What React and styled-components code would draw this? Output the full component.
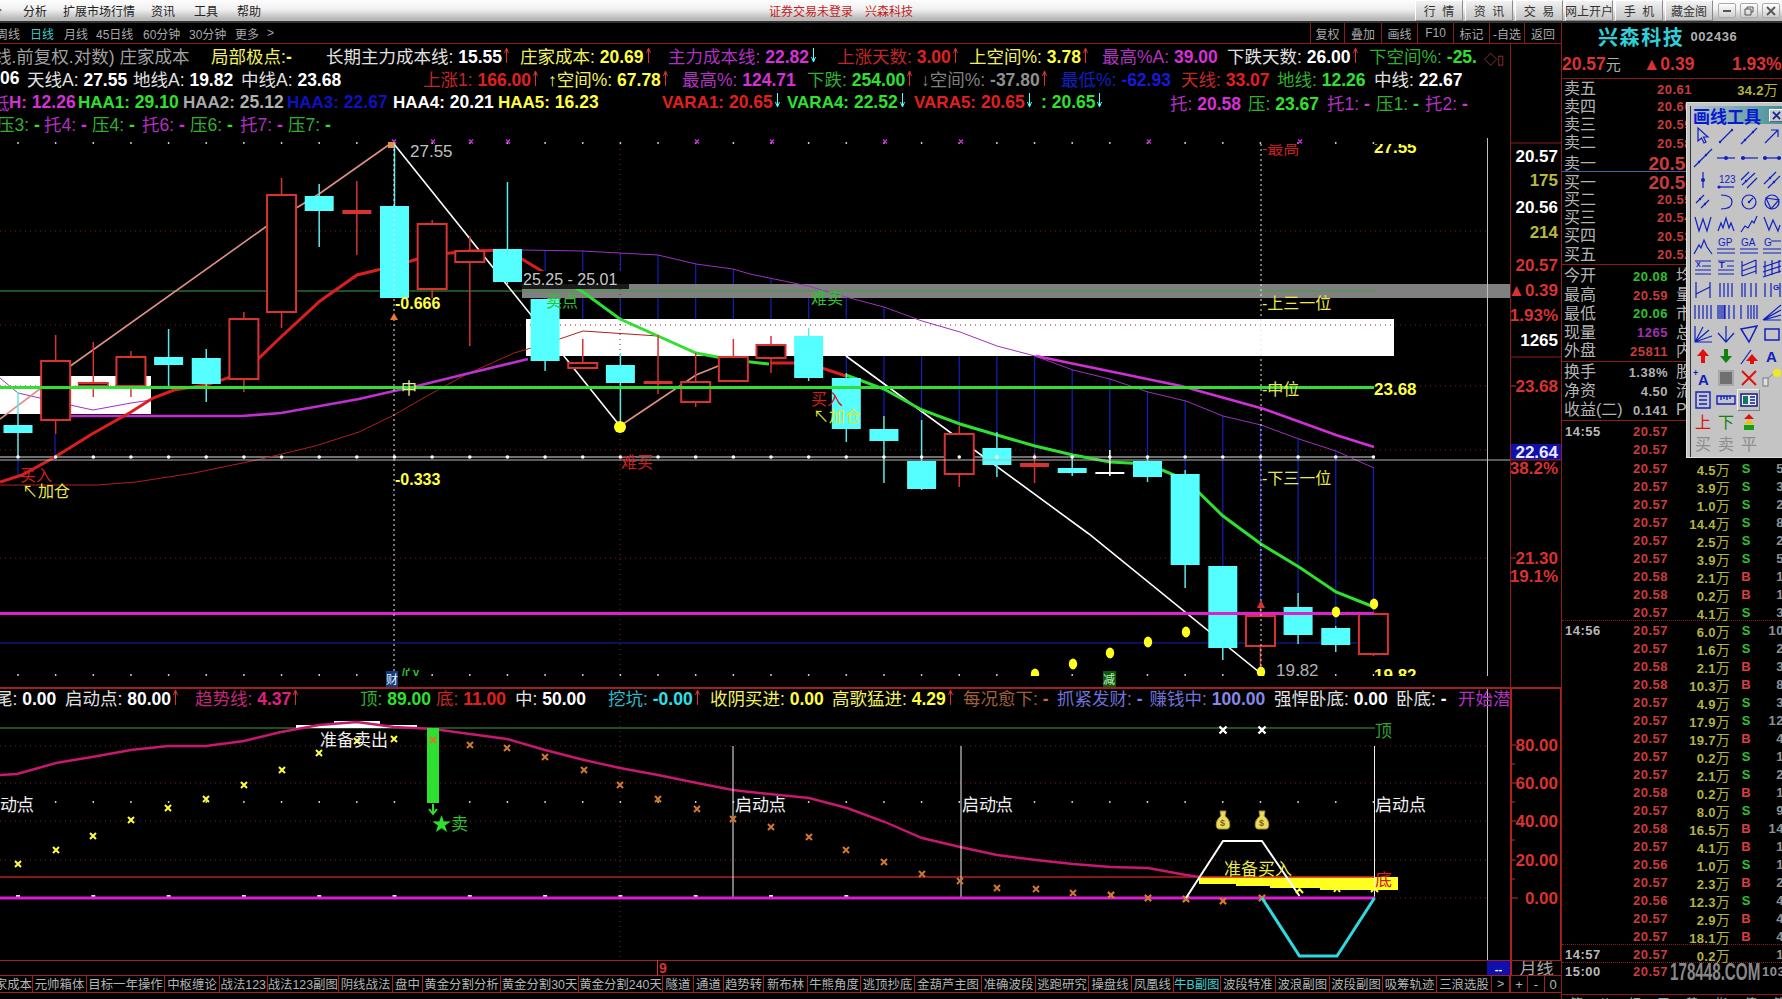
import React from 'react';
import styled, { createGlobalStyle } from 'styled-components';

const SANS = '"Liberation Sans", "Noto Sans CJK SC", sans-serif';
const RED = '#d83232';
const CYAN = '#55ffff';
const LINE_RED = '#8c1c1c';
const BLUE = '#1020c0';

const GlobalStyle = createGlobalStyle`
  html, body { margin: 0; padding: 0; background: #000; }
  * { box-sizing: border-box; }
`;

const Page = styled.div`
  width: 1782px;
  height: 999px;
  overflow: hidden;
  background: #000;
  display: flex;
  flex-direction: column;
  font-family: ${SANS};
`;

/* ---------- title bar ---------- */
const TitleBar = styled.div`
  height: 23px;
  flex: none;
  display: flex;
  align-items: stretch;
  background: linear-gradient(#fdfdfd 0%, #f0f0f0 45%, #b8b8b8 90%);
  border-bottom: 2px solid #333;
  font-size: 12px;
  color: #222;
`;
const MenuGroup = styled.div`
  width: 779px;
  display: flex;
  align-items: center;
  margin-left: -10px;
  flex: none;
`;
const MenuItem = styled.span`
  width: ${p => p.$w}px;
  white-space: nowrap;
`;
const Notice = styled.div`
  width: 646px;
  flex: none;
  display: flex;
  align-items: center;
  gap: 12px;
  color: #c41c1c;
`;
const TopButton = styled.div`
  width: ${p => p.$w || 48}px;
  margin: 0 2px 0 0;
  flex: none;
  display: flex;
  align-items: center;
  justify-content: center;
  background: linear-gradient(#f2f2f2, #c4c4c4);
  border: 1px solid;
  border-color: #fff #8a8a8a #8a8a8a #fff;
  color: #333;
  white-space: pre;
`;
const WinControls = styled.div`
  flex: 1;
  display: flex;
  align-items: center;
  justify-content: center;
  gap: 4px;
`;
const WinButton = styled.div`
  width: 18px;
  height: 15px;
  display: flex;
  align-items: center;
  justify-content: center;
  background: linear-gradient(#fff, #cfcfcf);
  border: 1px solid #aaa;
  border-radius: 2px;
`;

/* ---------- body ---------- */
const Body = styled.div`
  flex: 1;
  display: flex;
  min-height: 0;
`;
const LeftPane = styled.div`
  width: 1562px;
  flex: none;
  display: flex;
  flex-direction: column;
  border-right: 1px solid ${LINE_RED};
`;
const ToolRow = styled.div`
  height: 21px;
  flex: none;
  display: flex;
  align-items: center;
  border-bottom: 1px solid ${LINE_RED};
  font-size: 12px;
  color: #a8a8a8;
`;
const PeriodTabs = styled.div`
  flex: 1;
  display: flex;
  align-items: center;
  margin-left: -4px;
`;
const PeriodTab = styled.span`
  width: ${p => p.$w}px;
  color: ${p => (p.$on ? '#40c8c8' : '#a8a8a8')};
  white-space: nowrap;
`;
const ToolCell = styled.div`
  width: ${p => p.$w || 36}px;
  height: 100%;
  display: flex;
  align-items: center;
  justify-content: center;
  border-left: 1px solid ${LINE_RED};
  white-space: nowrap;
  overflow: hidden;
`;

const PanelRow = styled.div`
  height: ${p => p.$h}px;
  flex: none;
  display: flex;
  border-top: ${p => (p.$line ? `2px solid #a02020` : 'none')};
`;
const ChartArea = styled.div`
  width: 1510px;
  flex: none;
  position: relative;
  overflow: hidden;
`;
const AxisBox = styled.div`
  width: 51px;
  flex: none;
  border-left: ${p => (p.$strong ? `2px solid #b02020` : `1px solid ${LINE_RED}`)};
  overflow: hidden;
`;
const ChartSvg = styled.svg`
  display: block;
`;
const ChartText = styled.text`
  font-family: ${SANS};
  font-size: ${p => p.$s || 16}px;
  font-weight: ${p => (p.$b ? 700 : 400)};
  fill: ${p => p.$c || '#fff'};
  dominant-baseline: central;
`;

/* ---------- legend lines on the charts ---------- */
const Legend = styled.div`
  position: absolute;
  top: ${p => p.$top}px;
  left: 0;
  width: 1510px;
`;
const LegendRow = styled.div`
  height: ${p => p.$h || 22.7}px;
  display: flex;
  align-items: center;
  margin-left: ${p => p.$shift || 0}px;
  padding-top: ${p => p.$nudge || 0}px;
  white-space: nowrap;
`;
const LegendItem = styled.div`
  width: ${p => p.$w}px;
  flex: none;
  white-space: nowrap;
`;
const LegendLabel = styled.span`
  font-size: ${p => (p.$b ? 17 : 17.5)}px;
  font-weight: ${p => (p.$b ? 700 : 400)};
  color: ${p => p.$c};
`;
const LegendValue = styled.span`
  font-size: 17.5px;
  font-weight: 700;
  color: ${p => p.$c};
`;
const LegendArrow = styled.svg`
  width: 5px;
  height: 15px;
  margin-left: 2px;
  vertical-align: 0;
  fill: none;
  stroke: ${p => p.$c};
`;
const CornerMarks = styled.span`
  position: absolute;
  top: 5px;
  left: 1484px;
  font-size: 13px;
  color: #a04040;
`;

/* ---------- strip and formula tabs ---------- */
const Strip = styled.div`
  height: 16px;
  flex: none;
  display: flex;
  border-top: 1px solid #a02020;
  border-bottom: 1px solid #a02020;
`;
const StripLeft = styled.div`
  width: 1487px;
  flex: none;
  display: flex;
  align-items: center;
  padding-left: 657px;
  font-size: 14px;
  font-weight: 700;
  color: ${RED};
`;
const StripMark = styled.span`
  border-left: 1px solid ${RED};
  padding-left: 1px;
`;
const StripBlue = styled.div`
  width: 23px;
  flex: none;
  background: #1010b0;
  color: #fff;
  display: flex;
  align-items: flex-end;
  justify-content: center;
  font-size: 11px;
  line-height: 11px;
  font-weight: 700;
`;
const StripPeriod = styled.div`
  flex: 1;
  border-left: 2px solid #b02020;
  font-size: 17px;
  line-height: 15px;
  color: #a8a8a8;
  text-align: center;
  overflow: hidden;
`;
const TabBar = styled.div`
  height: 17px;
  flex: none;
  display: flex;
  border-bottom: 1px solid #a02020;
  font-size: 12.4px;
  color: #b4b4b4;
`;
const FormulaTab = styled.div`
  width: ${p => p.$w}px;
  flex: none;
  display: flex;
  align-items: center;
  justify-content: ${p => (p.$clip ? 'flex-end' : 'center')};
  border-right: 1px solid #a02020;
  white-space: nowrap;
  overflow: hidden;
  color: ${p => (p.$on ? '#40d0d0' : '#b4b4b4')};
`;
const StepCell = styled.div`
  flex: 1;
  display: flex;
  align-items: center;
  justify-content: center;
  border-left: 1px solid #a02020;
  font-size: 13px;
`;

/* ---------- right hand quote panel ---------- */
const InfoPanel = styled.div`
  flex: 1;
  position: relative;
  overflow: hidden;
  display: flex;
  flex-direction: column;
  font-size: 13px;
  font-weight: 700;
  color: #b0b0b0;
`;
const StockHead = styled.div`
  height: 27px;
  flex: none;
  display: flex;
  align-items: center;
  padding-left: 36px;
  gap: 6px;
`;
const StockName = styled.span`
  font-size: 20px;
  letter-spacing: 1.6px;
  color: #30cfd8;
`;
const StockCode = styled.span`
  font-size: 13px;
  letter-spacing: .6px;
  color: #b0b0b0;
`;
const PriceLine = styled.div`
  height: 29px;
  flex: none;
  display: flex;
  align-items: center;
  border-bottom: 1px solid ${LINE_RED};
  font-size: 17.5px;
  color: ${RED};
`;
const PriceCell = styled.span`
  width: ${p => p.$w}px;
  flex: none;
  white-space: nowrap;
`;
const PriceUnit = styled.span`
  font-size: 15px;
  font-weight: 400;
  color: #b0b0b0;
`;
const QuoteBlock = styled.div`
  flex: none;
  border-bottom: ${p => (p.$split ? '1px solid #4060a8' : `1px solid ${LINE_RED}`)};
  padding-top: ${p => p.$pad || 0}px;
`;
const QuoteRow = styled.div`
  height: 18.4px;
  display: grid;
  grid-template-columns: 60px 68px 86px;
  align-items: center;
  padding-left: 2px;
  white-space: nowrap;
`;
const RowName = styled.span`
  font-size: 16px;
  font-weight: 400;
  line-height: 18px;
  color: #b4b4b4;
`;
const QuotePrice = styled.span`
  text-align: right;
  font-size: ${p => (p.$big ? 19 : 13)}px;
  letter-spacing: ${p => (p.$big ? 0 : 0.5)}px;
  margin-right: ${p => (p.$big ? -4 : 0)}px;
  color: #c83c3c;
`;
const QuoteVol = styled.span`
  text-align: right;
  letter-spacing: .3px;
  color: #b4b440;
`;
const Unit = styled.span`
  font-size: 14px;
  font-weight: 400;
`;
const StatRow = styled.div`
  height: ${p => p.$h || 18.8}px;
  display: grid;
  grid-template-columns: 64px 40px 8px 40px;
  align-items: center;
  padding-left: 2px;
  white-space: nowrap;
`;
const StatValue = styled.span`
  text-align: right;
  letter-spacing: .5px;
  color: ${p => p.$c};
`;
const TickList = styled.div`
  flex: 1;
  padding-top: 1px;
`;
const TickRow = styled.div`
  height: 18px;
  display: grid;
  grid-template-columns: 50px 53px 62px 32px 22px;
  align-items: center;
  white-space: nowrap;
  padding-left: 3px;
  border-top: ${p => (p.$dash ? `1px dotted ${LINE_RED}` : '1px solid transparent')};
`;
const TickTime = styled.span`
  letter-spacing: .5px;
  color: #b8b8b8;
`;
const TickPrice = styled.span`
  text-align: right;
  letter-spacing: .5px;
  color: #c83c3c;
`;
const TickVol = styled.span`
  text-align: right;
  letter-spacing: .3px;
  color: #b4b440;
`;
const TickSide = styled.span`
  text-align: center;
  color: ${p => (p.$side === 'S' ? '#30c030' : '#d84040')};
`;
const TickCount = styled.span`
  text-align: right;
  letter-spacing: .5px;
  color: #909090;
`;
const Watermark = styled.div`
  position: absolute;
  left: 108px;
  top: 936px;
  font-size: 23px;
  font-weight: 700;
  color: #888;
  white-space: nowrap;
  transform: scaleX(.66);
  transform-origin: left center;
`;
const PageTabs = styled.div`
  position: absolute;
  left: 0;
  right: 0;
  bottom: 0;
  height: 5px;
  border-top: 1px solid ${LINE_RED};
  overflow: hidden;
  display: flex;
  padding-left: 8px;
  gap: 16px;
  font-size: 13px;
  font-weight: 400;
  line-height: 17px;
  color: #a0a0a0;
`;

/* ---------- floating drawing tools ---------- */
const Toolbox = styled.div`
  position: absolute;
  left: 124px;
  top: 79px;
  width: 100px;
  height: 356px;
  background: #c4c4c4;
  border: 1px solid #e0e0e0;
  border-right: 0;
  box-shadow: inset 3px 3px 0 #c4c4c4, inset 4px 4px 0 #333;
  padding: 3px 0 0 4px;
`;
const ToolboxTitle = styled.div`
  height: 18px;
  display: flex;
  align-items: center;
  justify-content: space-between;
  padding: 0 2px 0 2px;
  background: linear-gradient(90deg, #b8c4cc, #3f8f96);
  color: #0a18d0;
  font-size: 17px;
  font-weight: 700;
  white-space: nowrap;
`;
const ToolboxClose = styled.div`
  width: 15px;
  height: 13px;
  display: flex;
  align-items: center;
  justify-content: center;
  background: #c8c8c8;
  border: 1px solid;
  border-color: #fff #666 #666 #fff;
`;
const ToolGrid = styled.div`
  margin-top: 1px;
  display: grid;
  grid-template-columns: repeat(4, 23px);
  grid-auto-rows: 22px;
`;
const ToolCellBox = styled.div`
  display: flex;
  align-items: center;
  justify-content: center;
  border: 1px solid;
  border-color: ${p => (p.$raised ? '#f0f0f0 #808080 #808080 #f0f0f0' : 'transparent')};
`;
const ToolText = styled.text`
  font-family: ${SANS};
  font-size: ${p => p.$s || 9}px;
  font-weight: ${p => (p.$b ? 700 : 400)};
  fill: ${p => p.$c || BLUE};
`;

/* ---------- data ---------- */
const xOf = i => 18 + 37.65 * i;
const CANDLE_W = 29;

// [type, high, bodyTop, bodyBottom, low]  r hollow red, R solid red doji, c cyan, w white doji
const CANDLES = [
  ['c', 392, 425, 433, 457], ['r', 335, 361, 420, 434], ['r', 342, 383, 386, 397], ['r', 351, 357, 386, 397],
  ['c', 329, 357, 365, 386], ['c', 349, 358, 384, 402], ['r', 312, 319, 379, 392], ['r', 178, 195, 312, 328],
  ['c', 184, 196, 211, 247], ['R', 181, 210, 214, 255], ['c', 144, 206, 298, 298], ['r', 220, 224, 289, 298],
  ['r', 236, 251, 262, 346], ['c', 182, 249, 282, 284], ['c', 299, 299, 361, 371], ['r', 339, 363, 368, 368],
  ['c', 353, 365, 383, 426], ['R', 335, 381, 384, 394], ['r', 353, 382, 402, 407], ['r', 339, 357, 381, 381],
  ['r', 336, 345, 358, 373], ['c', 328, 336, 378, 381], ['c', 373, 378, 429, 442], ['c', 416, 429, 441, 483],
  ['c', 420, 461, 489, 490], ['r', 426, 434, 474, 487], ['c', 432, 448, 465, 477], ['R', 453, 463, 467, 483],
  ['c', 456, 468, 473, 476], ['w', 450, 473, 473, 476], ['c', 457, 461, 477, 482], ['c', 470, 474, 565, 588],
  ['c', 566, 566, 648, 660], ['r', 607, 616, 646, 673], ['c', 593, 607, 635, 644], ['c', 626, 628, 645, 652],
  ['r', 614, 614, 654, 656],
];

const pts = a => a.map(p => p.join(',')).join(' ');

const UPPER_THIN = [[522, 250], [582, 251], [658, 255], [696, 264], [733, 269], [750, 274], [808, 286], [846, 297], [884, 307], [922, 321], [960, 332], [997, 346], [1035, 356], [1073, 370], [1110, 379], [1148, 392], [1186, 401], [1223, 416], [1261, 425], [1299, 439], [1336, 451], [1374, 468]];
const LEFT_THIN = [[0, 378], [18, 393], [70, 405], [93, 410], [131, 403], [151, 400]];
const THIN_RED = [[0, 485], [97, 485], [136, 482], [194, 473], [257, 460], [315, 446], [359, 432], [394, 415], [427, 396], [465, 375], [514, 353], [545, 344], [583, 331], [658, 336]];
const MAGENTA_UP = [[68, 416], [145, 416], [242, 416], [281, 413], [320, 406], [359, 399], [394, 391], [417, 386], [470, 373], [528, 359]];
const MAGENTA_DOWN = [[1036, 356], [1181, 386], [1264, 409], [1336, 435], [1374, 447]];
const RED_MA = [[0, 482], [22, 475], [55, 457], [92, 434], [131, 412], [153, 398], [174, 390], [206, 385], [228, 378], [259, 358], [281, 337], [320, 301], [357, 275], [394, 266], [431, 255], [470, 251], [507, 250], [545, 273]];
const RED_MA2 = [[771, 363], [794, 363], [825, 369], [846, 376]];
const GREEN_MA = [[545, 273], [583, 292], [620, 319], [658, 336], [696, 353], [733, 360], [769, 364]];
const GREEN_MA2 = [[846, 375], [884, 389], [922, 410], [960, 424], [997, 435], [1035, 446], [1073, 455], [1110, 462], [1148, 464], [1186, 480], [1223, 516], [1261, 544], [1299, 567], [1336, 592], [1374, 607]];
const SALMON = [[0, 419], [69, 367], [267, 226], [319, 194], [390, 144]];
const SALMON2 = [[620, 426], [696, 375], [733, 360]];
const WHITE_ZIG = [[394, 144], [620, 426]];
const WHITE_ZIG2 = [[846, 356], [1089, 534], [1264, 676]];

const BLUE_STEMS = [
  [18, 457, 476], [55, 434, 457], [93, 397, 416], [131, 397, 403],
  ...CANDLES.map((c, i) => [i, c]).slice(14).map(([i, c]) => {
    const x = xOf(i);
    let top = 250;
    for (let k = 0; k < UPPER_THIN.length - 1; k++) {
      const [x0, y0] = UPPER_THIN[k];
      const [x1, y1] = UPPER_THIN[k + 1];
      if (x >= x0 && x <= x1) top = y0 + ((y1 - y0) * (x - x0)) / (x1 - x0);
    }
    return [x, top, c[1]];
  }),
];

const YELLOW_DOTS = [[1035, 674], [1073, 664], [1110, 653], [1148, 642], [1186, 632], [1261, 672], [1336, 612], [1374, 604]];
const TOP_MARKS = [394, 433, 471, 508, 697, 772, 885, 961, 1149, 1300];

const SUB_MA = [[0, 775], [17, 774], [56, 763], [92, 757], [131, 750], [168, 746], [206, 746], [244, 741], [281, 732], [319, 725], [357, 722], [394, 727], [433, 729], [470, 734], [507, 739], [545, 750], [584, 760], [620, 768], [658, 775], [697, 783], [733, 790], [750, 792], [809, 798], [847, 808], [885, 822], [922, 838], [960, 847], [997, 855], [1036, 860], [1073, 864], [1111, 867], [1148, 868], [1186, 875], [1199, 877]];
const YELLOW_X = [[18, 864], [56, 850], [93, 836], [131, 820], [168, 808], [206, 799], [244, 785], [282, 770], [319, 753], [357, 741], [394, 739]];
const ORANGE_X = [[433, 740], [470, 745], [507, 748], [545, 757], [584, 770], [620, 785], [658, 799], [697, 809], [733, 819], [771, 827], [809, 837], [846, 850], [884, 862], [922, 874], [960, 881], [997, 888], [1036, 889], [1073, 893], [1111, 895], [1148, 898], [1186, 899], [1223, 901], [1262, 898]];

const RED_L = '#c02828';
const RED_V = '#e02020';
const YEL = '#f0f060';
const YEL_V = '#ffff40';
const MAG = '#b030c0';
const MAG_V = '#d830d8';
const GRN = '#30b030';
const GRN_V = '#30e030';
const WHT = '#e0e0e0';
const UP = RED;

const LEGEND_ROWS = [
  {
    shift: -6,
    items: [
      { t: '线.前复权.对数) 庄家成本', c: '#a0a0a0', w: 217 },
      { t: '局部极点:', v: '-', c: YEL, vc: YEL_V, w: 115 },
      { t: '长期主力成本线:', v: ' 15.55', c: WHT, vc: '#fff', a: 'u', ac: UP, w: 194 },
      { t: '庄家成本:', v: ' 20.69', c: YEL, vc: YEL_V, a: 'u', ac: UP, w: 148 },
      { t: '主力成本线:', v: ' 22.82', c: MAG, vc: MAG_V, a: 'd', ac: CYAN, w: 169 },
      { t: '上涨天数:', v: ' 3.00', c: RED_L, vc: RED_V, a: 'u', ac: UP, w: 132 },
      { t: '上空间%:', v: ' 3.78', c: YEL, vc: YEL_V, a: 'u', ac: UP, w: 133 },
      { t: '最高%A:', v: ' 39.00', c: MAG, vc: MAG_V, w: 125 },
      { t: '下跌天数:', v: ' 26.00', c: WHT, vc: '#fff', a: 'u', ac: UP, w: 142 },
      { t: '下空间%:', v: ' -25.', c: GRN, vc: GRN_V, w: 130 },
    ],
  },
  {
    shift: 0,
    items: [
      { t: '', v: '06', vc: '#fff', w: 27 },
      { t: '天线A:', v: ' 27.55', c: WHT, vc: '#fff', w: 106 },
      { t: '地线A:', v: ' 19.82', c: WHT, vc: '#fff', w: 108 },
      { t: '中线A:', v: ' 23.68', c: WHT, vc: '#fff', w: 182 },
      { t: '上涨1:', v: ' 166.00', c: RED_L, vc: RED_V, a: 'u', ac: UP, w: 125 },
      { t: '↑空间%:', v: ' 67.78', c: YEL, vc: YEL_V, a: 'u', ac: UP, w: 134 },
      { t: '最高%:', v: ' 124.71', c: MAG, vc: MAG_V, w: 125 },
      { t: '下跌:', v: ' 254.00', c: GRN, vc: GRN_V, a: 'u', ac: UP, w: 114 },
      { t: '↓空间%:', v: ' -37.80', c: '#808080', vc: '#909090', a: 'u', ac: UP, w: 140 },
      { t: '最低%:', v: ' -62.93', c: BLUE, vc: '#1818d8', w: 120 },
      { t: '天线:', v: ' 33.07', c: RED_L, vc: RED_V, w: 96 },
      { t: '地线:', v: ' 12.26', c: GRN, vc: GRN_V, w: 97 },
      { t: '中线:', v: ' 22.67', c: WHT, vc: '#fff', w: 100 },
    ],
  },
  {
    shift: -8,
    nudge: 4,
    items: [
      { t: '低', c: MAG, w: 17 },
      { t: 'H:', b: 1, v: ' 12.26', c: MAG_V, vc: MAG_V, w: 69 },
      { t: 'HAA1:', b: 1, v: ' 29.10', c: GRN_V, vc: GRN_V, w: 105 },
      { t: 'HAA2:', b: 1, v: ' 25.12', c: '#a8a8a8', vc: '#b0b0b0', w: 104 },
      { t: 'HAA3:', b: 1, v: ' 22.67', c: '#1010c0', vc: '#1010c0', w: 106 },
      { t: 'HAA4:', b: 1, v: ' 20.21', c: '#fff', vc: '#fff', w: 105 },
      { t: 'HAA5:', b: 1, v: ' 16.23', c: YEL_V, vc: YEL_V, w: 164 },
      { t: 'VARA1:', b: 1, v: ' 20.65', c: RED_V, vc: RED_V, a: 'd', ac: CYAN, w: 125 },
      { t: 'VARA4:', b: 1, v: ' 22.52', c: GRN_V, vc: GRN_V, a: 'd', ac: CYAN, w: 127 },
      { t: 'VARA5:', b: 1, v: ' 20.65', c: RED_V, vc: RED_V, a: 'd', ac: CYAN, w: 127 },
      { t: '', v: ': 20.65', vc: GRN_V, a: 'd', ac: CYAN, w: 129 },
      { t: '托:', v: ' 20.58', c: MAG, vc: MAG_V, w: 78 },
      { t: '压:', v: ' 23.67', c: GRN, vc: GRN_V, w: 79 },
      { t: '托1:', v: ' -', c: MAG, vc: MAG_V, w: 49 },
      { t: '压1:', v: ' -', c: GRN, vc: GRN_V, w: 49 },
      { t: '托2:', v: ' -', c: MAG, vc: MAG_V, w: 49 },
    ],
  },
  {
    shift: -3,
    items: [
      { t: '压3:', v: ' -', c: GRN, vc: GRN_V, w: 47 },
      { t: '托4:', v: ' -', c: MAG, vc: MAG_V, w: 48 },
      { t: '压4:', v: ' -', c: GRN, vc: GRN_V, w: 50 },
      { t: '托6:', v: ' -', c: MAG, vc: MAG_V, w: 48 },
      { t: '压6:', v: ' -', c: GRN, vc: GRN_V, w: 50 },
      { t: '托7:', v: ' -', c: MAG, vc: MAG_V, w: 48 },
      { t: '压7:', v: ' -', c: GRN, vc: GRN_V, w: 60 },
    ],
  },
];

const SUB_LEGEND = [
  { t: '尾:', v: ' 0.00', c: WHT, vc: '#fff', w: 70 },
  { t: '启动点:', v: ' 80.00', c: WHT, vc: '#fff', a: 'u', ac: UP, w: 130 },
  { t: '趋势线:', v: ' 4.37', c: '#c02878', vc: '#e02080', a: 'u', ac: UP, w: 165 },
  { t: '顶:', v: ' 89.00', c: GRN, vc: GRN_V, w: 76 },
  { t: '底:', v: ' 11.00', c: RED_L, vc: RED_V, w: 79 },
  { t: '中:', v: ' 50.00', c: WHT, vc: '#fff', w: 93 },
  { t: '挖坑:', v: ' -0.00', c: '#30b8c8', vc: '#30e0e8', a: 'u', ac: UP, w: 102 },
  { t: '收阴买进:', v: ' 0.00', c: YEL, vc: YEL_V, w: 122 },
  { t: '高歌猛进:', v: ' 4.29', c: YEL, vc: YEL_V, a: 'u', ac: UP, w: 131 },
  { t: '每况愈下:', v: ' -', c: '#a06038', vc: '#c07040', w: 94 },
  { t: '抓紧发财:', v: ' -', c: '#7070d8', vc: '#8080e0', w: 92.5 },
  { t: '赚钱中:', v: ' 100.00', c: '#7070d8', vc: '#8888e8', w: 124.5 },
  { t: '强悍卧底:', v: ' 0.00', c: WHT, vc: '#fff', w: 122 },
  { t: '卧底:', v: ' -', c: WHT, vc: '#fff', w: 62 },
  { t: '开始潜', c: MAG, w: 60 },
];

const FORMULA_TABS = [
  ['庄家成本', 33, 1], ['元帅箱体', 54], ['目标一年操作', 78], ['中枢缠论', 55], ['战法123', 47.5], ['战法123副图', 71.5], ['阴线战法', 54],
  ['盘中', 30], ['黄金分割分析', 78], ['黄金分割30天', 78], ['黄金分割240天', 84], ['隧道', 31], ['通道', 30], ['趋势转', 40],
  ['新布林', 44], ['牛熊角度', 53], ['逃顶抄底', 54], ['金葫芦主图', 67], ['准确波段', 54], ['逃跑研究', 53], ['操盘线', 43],
  ['凤凰线', 41.5], ['牛B副图', 47.5, 0, 1], ['波段特准', 54.5], ['波浪副图', 54.5], ['波段副图', 53], ['吸筹轨迹', 54], ['三浪选股', 55],
  ['>', 18],
];

const TICKS = [
  ['14:55', '20.57'], ['', '20.57'], ['', '20.57', '4.5', 'S', '5'], ['', '20.57', '3.9', 'S', '3'], ['', '20.57', '1.0', 'S', '2'],
  ['', '20.57', '14.4', 'S', '8'], ['', '20.57', '2.5', 'S', '2'], ['', '20.57', '3.9', 'S', '5'], ['', '20.58', '2.1', 'B', '1'],
  ['', '20.58', '0.2', 'B', '1'], ['', '20.57', '4.1', 'S', '3'], ['14:56', '20.57', '6.0', 'S', '10'], ['', '20.57', '1.6', 'S', '2'],
  ['', '20.58', '2.1', 'B', '3'], ['', '20.58', '10.3', 'B', '8'], ['', '20.57', '4.9', 'S', '3'], ['', '20.57', '17.9', 'S', '12'],
  ['', '20.57', '19.7', 'B', '4'], ['', '20.57', '0.2', 'S', '1'], ['', '20.57', '2.1', 'S', '2'], ['', '20.58', '0.2', 'B', '1'],
  ['', '20.57', '8.0', 'S', '9'], ['', '20.58', '16.5', 'B', '14'], ['', '20.57', '4.1', 'B', '1'], ['', '20.56', '1.0', 'S', '1'],
  ['', '20.57', '2.3', 'B', '2'], ['', '20.56', '12.3', 'S', '4'], ['', '20.57', '2.9', 'B', '4'], ['', '20.57', '18.1', 'B', '4'],
  ['14:57', '20.57', '0.2', '', '1'], ['15:00', '20.57', '', '', '103'],
];

/* ---------- small drawings ---------- */
const Candle = ({ i, c }) => {
  const [type, high, top, bottom, low] = c;
  const x = xOf(i);
  const left = x - CANDLE_W / 2;
  if (type === 'c') {
    return (
      <g>
        <line x1={x} x2={x} y1={high} y2={low} stroke="#60e8e8" strokeWidth="1.5" />
        <rect x={left} y={top} width={CANDLE_W} height={bottom - top} fill={CYAN} />
      </g>
    );
  }
  if (type === 'w') {
    return (
      <g>
        <line x1={x} x2={x} y1={high} y2={low} stroke="#fff" strokeWidth="1.5" />
        <line x1={left} x2={left + CANDLE_W} y1={top} y2={top} stroke="#fff" strokeWidth="2" />
      </g>
    );
  }
  if (type === 'R') {
    return (
      <g>
        <line x1={x} x2={x} y1={high} y2={low} stroke={RED} strokeWidth="1.5" />
        <rect x={left} y={top} width={CANDLE_W} height={bottom - top} fill={RED} />
      </g>
    );
  }
  return (
    <g>
      <line x1={x} x2={x} y1={high} y2={low} stroke={RED} strokeWidth="1.5" />
      <rect x={left} y={top} width={CANDLE_W} height={bottom - top} fill="#000" stroke={RED} strokeWidth="2" />
    </g>
  );
};

const Cross = ({ x, y, c, r = 3, w = 2 }) => (
  <path d={`M${x - r} ${y - r}L${x + r} ${y + r}M${x + r} ${y - r}L${x - r} ${y + r}`} stroke={c} strokeWidth={w} />
);

const MoneyBag = ({ x, y }) => (
  <g>
    <path d={`M${x - 3} ${y - 11}L${x + 3} ${y - 11}L${x + 2} ${y - 6}C${x + 8} ${y - 2} ${x + 8} ${y + 7} ${x + 4} ${y + 7}L${x - 4} ${y + 7}C${x - 8} ${y + 7} ${x - 8} ${y - 2} ${x - 2} ${y - 6}Z`} fill="#e8dc60" stroke="#a89020" />
    <ChartText x={x - 3} y={y + 1} $s={9} $b $c="#806010">$</ChartText>
  </g>
);

const Labels = ({ items }) => items.map(([x, y, text, c, s, b]) => (
  <ChartText key={`${x}-${y}-${text}`} x={x} y={y} $c={c} $s={s || 16} $b={b}>{text}</ChartText>
));

const PRICE_LABELS = [
  [410, 151, '27.55', '#c0c0c0', 17],
  [395, 303, '-0.666', '#ffff40', 16, 1],
  [395, 479, '-0.333', '#ffff40', 16, 1],
  [523, 279, '25.25 - 25.01', '#c8c8c8', 16],
  [546, 301, '卖点', '#30c030', 16],
  [401, 388, '中', '#e8e8a0', 16],
  [20, 475, '买入', '#c82020', 16],
  [22, 491, '↖加仓', '#e8e850', 16],
  [621, 462, '难买', '#c82020', 16],
  [811, 298, '难卖', '#30c030', 16],
  [811, 399, '买入', '#c82020', 16],
  [813, 416, '↖加仓', '#d8e830', 16],
  [1262, 303, '-上三一位', '#e8e850', 16],
  [1262, 389, '-中位', '#e8e850', 16],
  [1374, 389, '23.68', '#ffff40', 17, 1],
  [1262, 478, '-下三一位', '#e8e850', 16],
  [1276, 670, '19.82', '#b0b0b0', 17],
  [1374, 675, '19.82', '#ffff40', 17, 1],
];

const PriceChart = () => (
  <ChartSvg width="1510" height="643" viewBox="0 44 1510 643">
    <defs>
      <clipPath id="plot"><rect x="0" y="138" width="1510" height="538" /></clipPath>
      <clipPath id="plotTop"><rect x="1200" y="144" width="300" height="20" /></clipPath>
    </defs>
    <g clipPath="url(#plot)">
      {BLUE_STEMS.map(([x, a, b]) => (
        <line key={`${x}-${a}`} x1={x} x2={x} y1={a} y2={b} stroke={BLUE} strokeWidth="1.2" />
      ))}
      <rect x="0" y="376" width="151" height="38" fill="#fff" />
      <rect x="526" y="319" width="868" height="37" fill="#fff" />
      <rect x="522" y="284" width="988" height="14" fill="#808080" />
      {[231, 325, 386, 450, 558].map(y => (
        <line key={y} x1="0" x2="1487" y1={y} y2={y} stroke="#7c2020" strokeDasharray="1 4" />
      ))}
      <line x1="620" x2="620" y1="144" y2="676" stroke="#7c2020" strokeDasharray="1 4" />
      <line x1="0" x2="1374" y1="291" y2="291" stroke="#40a040" />
      <line x1="0" x2="1374" y1="457" y2="457" stroke="#e0e0e0" />
      <line x1="0" x2="1360" y1="643" y2="643" stroke={BLUE} />
      <polyline points={pts(UPPER_THIN)} fill="none" stroke="#a030c0" />
      <polyline points={pts(LEFT_THIN)} fill="none" stroke="#a030c0" />
      <polyline points={pts(THIN_RED)} fill="none" stroke="#b02020" />
      <polyline points={pts(SALMON)} fill="none" stroke="#e09080" strokeWidth="1.6" />
      <polyline points={pts(SALMON2)} fill="none" stroke="#e09080" strokeWidth="1.6" />
      <polyline points={pts(WHITE_ZIG)} fill="none" stroke="#fff" strokeWidth="1.6" />
      <polyline points={pts(WHITE_ZIG2)} fill="none" stroke="#fff" strokeWidth="1.6" />
      <polyline points={pts(MAGENTA_UP)} fill="none" stroke="#c030d0" strokeWidth="2.6" />
      <polyline points={pts(MAGENTA_DOWN)} fill="none" stroke="#d030d8" strokeWidth="2.6" />
      <polyline points={pts(RED_MA)} fill="none" stroke="#dc1e1e" strokeWidth="3" />
      <polyline points={pts(RED_MA2)} fill="none" stroke="#dc1e1e" strokeWidth="3" />
      <polyline points={pts(GREEN_MA)} fill="none" stroke="#30e030" strokeWidth="3" />
      <polyline points={pts(GREEN_MA2)} fill="none" stroke="#30e030" strokeWidth="3" />
      {CANDLES.map((c, i) => <Candle key={i} i={i} c={c} />)}
      <line x1="0" x2="1374" y1="387.5" y2="387.5" stroke="#30e030" strokeWidth="3" />
      <line x1="0" x2="1374" y1="613.5" y2="613.5" stroke="#e020d0" strokeWidth="3" />
      <line x1="0" x2="1510" y1="460" y2="460" stroke="#b8b8b8" />
      <line x1="394" x2="394" y1="144" y2="676" stroke="#e8e8e8" strokeDasharray="2 3" />
      <line x1="1261" x2="1261" y1="144" y2="676" stroke="#e8e8e8" strokeDasharray="2 3" />
      <line x1="1487.5" x2="1487.5" y1="70" y2="687" stroke="#c0c0c0" />
      {CANDLES.map((c, i) => (
        <g key={i}>
          <circle cx={xOf(i)} cy="143" r="0.9" fill="#e0e0e0" />
          <circle cx={xOf(i)} cy="457" r="1.8" fill="#fff" />
          <circle cx={xOf(i)} cy="675" r="0.9" fill="#e0e0e0" />
        </g>
      ))}
      {TOP_MARKS.map(x => <Cross key={x} x={x} y={141.5} c="#c030d0" r={2} w={1.4} />)}
      {YELLOW_DOTS.map(([x, y]) => <ellipse key={x} cx={x} cy={y} rx="4.2" ry="5.4" fill="#ffff20" />)}
      <circle cx="620" cy="427" r="6" fill="#ffff20" />
      <path d="M394 313L398 320H390Z" fill="#e87838" />
      <rect x="388" y="142" width="6" height="6" fill="#e09050" />
      <path d="M1261 600L1265 608H1257Z" fill="#d83232" />
      <rect x="522" y="271" width="107" height="18" fill="#000" />
      <rect x="522" y="284" width="107" height="5" fill="#1a1a1a" />
      <Labels items={PRICE_LABELS} />
      <g clipPath="url(#plotTop)">
        <ChartText x="1262" y="148" $c="#c82020">-最高</ChartText>
        <ChartText x="1374" y="147" $c="#ffff40" $s={17} $b>27.55</ChartText>
      </g>
    </g>
    <rect x="386" y="671" width="12" height="18" fill="#103c78" />
    <ChartText x="386" y="680" $s={12} $c="#e8f0ff">财</ChartText>
    <rect x="1103" y="671" width="13" height="18" fill="#105a10" />
    <ChartText x="1103" y="680" $s={12} $c="#c0f0c0">减</ChartText>
    <ChartText x="402" y="672" $s={11} $b $c="#30c030">/ґ v</ChartText>
  </ChartSvg>
);

const SUB_LABELS = [
  [320, 740, '准备卖出', '#f0f0f0', 17],
  [451, 824, '卖', '#30c030', 17],
  [-17, 805, '启动点', '#f0f0f0', 17],
  [735, 805, '启动点', '#f0f0f0', 17],
  [962, 805, '启动点', '#f0f0f0', 17],
  [1375, 805, '启动点', '#f0f0f0', 17],
  [1375, 731, '顶', '#30a030', 17],
  [1224, 869, '准备买入', '#e8e850', 17],
  [1375, 880, '底', '#d02020', 17],
];

const SubChart = () => (
  <ChartSvg width="1510" height="271" viewBox="0 689 1510 271">
    {[746, 783, 821, 860, 898].map(y => (
      <line key={y} x1="0" x2="1487" y1={y} y2={y} stroke="#7c2020" strokeDasharray="1 4" />
    ))}
    <line x1="620" x2="620" y1="716" y2="960" stroke="#7c2020" strokeDasharray="1 4" />
    <line x1="0" x2="1375" y1="728" y2="728" stroke="#40a040" />
    <line x1="0" x2="1375" y1="877" y2="877" stroke="#b02020" strokeWidth="1.4" />
    <rect x="296" y="725" width="121" height="3" fill="#fff" />
    <rect x="334" y="721" width="46" height="6" fill="#fff" />
    <polyline points={pts(SUB_MA)} fill="none" stroke="#c81870" strokeWidth="2.4" />
    {CANDLES.map((c, i) => <circle key={i} cx={xOf(i)} cy="802" r="0.9" fill="#e0e0e0" />)}
    {[0, 2, 4, 6, 8, 10, 12, 14, 16, 18, 20, 22].map(i => (
      <rect key={i} x={xOf(i) - 2} y="895" width="4" height="2" fill="#e0e0e0" />
    ))}
    <polygon points="1199,877 1398,877 1398,890 1320,890 1320,888 1270,888 1270,886 1236,886 1236,884 1199,884" fill="#ffff20" />
    <line x1="1199" x2="1375" y1="877" y2="877" stroke="#d02020" strokeWidth="1.4" />
    {[733, 961, 1374.5].map(x => <line key={x} x1={x} x2={x} y1="746" y2="898" stroke="#f0f0f0" />)}
    <rect x="427" y="728" width="12" height="75" fill="#30e030" />
    <path d="M433 804V813M429 809L433 814L437 809" fill="none" stroke="#30e030" strokeWidth="2" />
    <ChartText x="432" y="824" $s={19} $c="#30e030">★</ChartText>
    {YELLOW_X.map(([x, y]) => <Cross key={x} x={x} y={y} c="#ffff40" />)}
    {ORANGE_X.map(([x, y]) => <Cross key={x} x={x} y={y} c="#d07830" />)}
    <line x1="0" x2="1375" y1="898" y2="898" stroke="#d81ed0" strokeWidth="3" />
    {ORANGE_X.slice(-5).map(([x, y]) => <Cross key={x} x={x} y={y} c="#d07830" />)}
    <polyline points="1186,898 1223,841 1262,841 1299.5,896" fill="none" stroke="#fff" strokeWidth="2" />
    <polyline points="1262,898 1299.5,956 1337,956 1374.5,898" fill="none" stroke="#30d8e0" strokeWidth="3" />
    <path d="M1296 893L1299.5 889L1303 893M1334 892L1337 888L1340 892M1371 892L1374.5 888L1378 892" fill="none" stroke="#ffff40" strokeWidth="2" />
    <Cross x={1223} y={730} c="#fff" r={3.5} w={2.4} />
    <Cross x={1262} y={730} c="#fff" r={3.5} w={2.4} />
    <MoneyBag x={1223} y={822} />
    <MoneyBag x={1262} y={822} />
    <Labels items={SUB_LABELS} />
    <line x1="1487.5" x2="1487.5" y1="689" y2="960" stroke="#c0c0c0" />
  </ChartSvg>
);

const PriceAxis = () => (
  <ChartSvg width="50" height="643" viewBox="1511 44 50 643">
    <line x1="1511" x2="1561" y1="143" y2="143" stroke={LINE_RED} />
    <line x1="1511" x2="1561" y1="357" y2="357" stroke={LINE_RED} />
    {[
      [156, '20.57', '#fff'], [180, '175', '#b8b840'], [207, '20.56', '#fff'], [232, '214', '#b8b840'],
      [265, '20.57', RED], [290, '▲0.39', RED], [315, '1.93%', RED], [340, '1265', '#fff'], [386, '23.68', RED],
    ].map(([y, t, c]) => (
      <ChartText key={y} x="1558" y={y} $s={17} $b $c={c} textAnchor="end">{t}</ChartText>
    ))}
    <rect x="1511" y="444" width="50" height="16" fill="#1010a8" />
    <line x1="1511" x2="1561" y1="460" y2="460" stroke="#a02020" />
    <ChartText x="1558" y="452" $s={17} $b $c="#e8e8ff" textAnchor="end">22.64</ChartText>
    <ChartText x="1558" y="468" $s={17} $b $c={RED} textAnchor="end">38.2%</ChartText>
    <ChartText x="1558" y="558" $s={17} $b $c={RED} textAnchor="end">21.30</ChartText>
    <ChartText x="1558" y="576" $s={17} $b $c={RED} textAnchor="end">19.1%</ChartText>
    <path d="M1511 386H1516M1511 558H1516" stroke="#c03030" />
  </ChartSvg>
);

const SubAxis = () => (
  <ChartSvg width="49" height="271" viewBox="1512 689 49 271">
    {[[745.5, '80.00'], [783, '60.00'], [821, '40.00'], [860, '20.00'], [898, '0.00']].map(([y, t]) => (
      <g key={t}>
        <ChartText x="1558" y={y} $s={17} $b $c={RED} textAnchor="end">{t}</ChartText>
      </g>
    ))}
    <path d="M1512 745H1516M1512 783H1516M1512 821H1516M1512 860H1516M1512 898H1518M1512 764H1515M1512 802H1515M1512 840H1515M1512 879H1515" stroke="#c03030" />
    <line x1="1560.5" x2="1560.5" y1="689" y2="960" stroke="#b02020" />
  </ChartSvg>
);

/* ---------- tool icons, 20x20 ---------- */
const Tool = ({ d, dots, r = 1.2, children, sw = 1.2, c = BLUE }) => (
  <svg width="20" height="20" viewBox="0 0 20 20">
    {d && <path d={d} fill="none" stroke={c} strokeWidth={sw} />}
    {dots && dots.map(([x, y]) => <circle key={`${x}${y}`} cx={x} cy={y} r={r} fill={c} />)}
    {children}
  </svg>
);
const barLines = xs => xs.map(x => `M${x} 3V17`).join('');
const CIRCLE = 'M3 10a7 7 0 1 0 14 0a7 7 0 1 0 -14 0';
const GP_LINES = 'M1 13H19M1 17H19';

const TOOLS = [
  <Tool d="M5 2L5 15L8.5 12L11 17L13 16L10.5 11L15 11Z" />,
  <Tool d="M4 16L16 4" dots={[[4, 16], [16, 4]]} />,
  <Tool d="M2 18L18 2" dots={[[6, 14], [14, 6]]} />,
  <Tool d="M3 17L16 4M9 4L16 4L16 11" />,
  <Tool d="M1 19L19 1" dots={[[6, 14], [13, 7]]} />,
  <Tool d="M1 10H19" dots={[[10, 10]]} r={2} />,
  <Tool d="M2 10H19" dots={[[4, 10]]} r={2} />,
  <Tool d="M1 10H19" dots={[[3, 10], [17, 10]]} r={2} />,
  <Tool d="M10 2V18" dots={[[10, 10]]} r={2} />,
  <Tool d="M2 17H18" dots={[[3, 17]]} r={1.6}><ToolText x="3" y="13" $s={10}>123</ToolText></Tool>,
  <Tool d="M2 10L10 2M3 15L16 3M8 18L18 8" dots={[[7, 11]]} />,
  <Tool d="M2 14L14 2M6 18L18 6" dots={[[8, 8], [12, 12]]} />,
  <Tool d="M3 11L11 3M8 16L16 8" dots={[[7, 7], [12, 12]]} />,
  <Tool d="M5 3Q16 3 16 10Q16 17 5 17" />,
  <Tool d={`${CIRCLE}M10 10L14 6`} dots={[[10, 10]]} />,
  <Tool d={`${CIRCLE}M4 6L17 8L9 17Z`} />,
  <Tool d="M2 3L6 17L10 5L14 17L18 3" />,
  <Tool d="M2 17L5 9L7 14L10 4L13 14L15 9L18 17" />,
  <Tool d="M2 18L6 12L9 14L13 7L15 9L18 2" />,
  <Tool d="M2 3L7 16L11 6L16 17L18 11" />,
  <Tool d="M1 18L6 9L8 12L11 4L14 11L19 18" />,
  <Tool d={GP_LINES}><ToolText x="2" y="10" $s={10}>GP</ToolText></Tool>,
  <Tool d={GP_LINES}><ToolText x="2" y="10" $s={10}>GA</ToolText></Tool>,
  <Tool d={`${GP_LINES}M9 5H19`}><ToolText x="2" y="10" $s={10}>G</ToolText></Tool>,
  <Tool d="M2 3H18M9 8H18M2 12H18M2 16H18"><ToolText x="3" y="9" $s={7} $b>X</ToolText></Tool>,
  <Tool d="M2 3H18M11 8H18M2 12H18M2 16H18"><ToolText x="3" y="10" $s={9} $b>T</ToolText></Tool>,
  <Tool d="M3 3V18M17 2V16M3 8L17 2M3 13L17 8M3 18L17 13" />,
  <Tool d="M3 3V18M10 2V17M17 2V15M1 9L19 3M1 14L19 8M1 19L19 13" />,
  <Tool d="M3 2V18M17 2V18M3 14L17 7" />,
  <Tool d={barLines([4, 8, 12, 16])} />,
  <Tool d={barLines([3, 6, 12, 17])} />,
  <Tool d={barLines([3, 9, 18])}><ToolText x="11" y="10" $s={8} $b>G</ToolText></Tool>,
  <Tool d={barLines([2, 6, 10, 14, 18])} />,
  <Tool d={barLines([2, 4, 6, 8, 9, 13, 18])} />,
  <Tool d={barLines([2, 9, 12, 15, 18])} />,
  <Tool d="M1 18L19 3M1 18L19 8M1 18L19 13M1 18H19" />,
  <Tool d="M2 2V18H19M2 18L10 3M2 18L16 6M2 18L19 12" />,
  <Tool d="M10 2V18M2 9L10 18L18 9" />,
  <Tool d="M2 5L18 2L10 18Z" sw={1.5} />,
  <Tool d="M3 5H17V16H3Z" sw={1.5} />,
  <Tool><path d="M10 3L16 10H12V17H8V10H4Z" fill="#e01010" /></Tool>,
  <Tool><path d="M10 17L16 10H12V3H8V10H4Z" fill="#108010" /></Tool>,
  <Tool d="M2 18L12 4"><path d="M13 8L19 15H15V18H11V15H7Z" fill="#e01010" /></Tool>,
  <Tool><ToolText x="4" y="16" $s={15} $b>A</ToolText></Tool>,
  <Tool><ToolText x="0" y="8" $s={9} $b>+</ToolText><ToolText x="5" y="17" $s={15} $b>A</ToolText></Tool>,
  <Tool><rect x="3" y="3" width="14" height="14" fill="#707070" stroke="#a8a8a8" strokeWidth="2" /></Tool>,
  <Tool d="M3 3L17 17M17 3L3 17" sw={2} c="#e01010" />,
  <Tool><rect x="1" y="10" width="5" height="8" fill="#e0e0e0" stroke="#777" /><path d="M6 10L14 4" stroke="#888" /><circle cx="15" cy="5" r="4" fill="#f0e820" /></Tool>,
  <Tool d="M3 2H17V18H3ZM6 6H14M6 10H14M6 14H14" sw={1.4} />,
  <Tool d="M1 6H19V14H1ZM5 6V10M8 6V9M11 6V10M14 6V9" sw={1.4} />,
  <Tool><rect x="2" y="4" width="16" height="12" fill="#e8e8e8" stroke="#101880" strokeWidth="1.5" /><rect x="4" y="6" width="5" height="8" fill="#107860" /><path d="M11 7H16M11 10H16M11 13H16" stroke="#1020a0" strokeWidth="1.4" /></Tool>,
  null,
  <Tool><ToolText x="2" y="16" $s={16} $c="#e01010">上</ToolText></Tool>,
  <Tool><ToolText x="2" y="16" $s={16} $c="#108010">下</ToolText></Tool>,
  <Tool><path d="M10 2L15 7H5Z" fill="#e01010" /><path d="M10 7L15 12H5Z" fill="#e8c010" /><path d="M5 13H15V18H5Z" fill="#10a010" /></Tool>,
  null,
  <Tool><ToolText x="2" y="16" $s={16} $c="#8c8c8c">买</ToolText></Tool>,
  <Tool><ToolText x="2" y="16" $s={16} $c="#8c8c8c">卖</ToolText></Tool>,
  <Tool><ToolText x="2" y="16" $s={16} $c="#8c8c8c">平</ToolText></Tool>,
];

const Cross12 = ({ c = '#222', s = 10 }) => (
  <svg width={s} height={s} viewBox="0 0 10 10">
    <path d="M1 1L9 9M9 1L1 9" stroke={c} strokeWidth="1.8" />
  </svg>
);

/* ---------- assembled parts ---------- */
const Arrow = ({ dir, color }) => (
  <LegendArrow $c={color} viewBox="0 0 5 15">
    {dir === 'u' ? <path d="M2.5 15V1M.5 5L2.5 0L4.5 5" /> : <path d="M2.5 0V13M.5 9L2.5 14L4.5 9" />}
  </LegendArrow>
);

const LegendLine = ({ items, shift, nudge, h }) => (
  <LegendRow $shift={shift} $nudge={nudge} $h={h}>
    {items.map(it => (
      <LegendItem key={`${it.t}${it.v}`} $w={it.w}>
        {it.t && <LegendLabel $c={it.c} $b={it.b}>{it.t}</LegendLabel>}
        {it.v && <LegendValue $c={it.vc}>{it.v}</LegendValue>}
        {it.a && <Arrow dir={it.a} color={it.ac} />}
      </LegendItem>
    ))}
  </LegendRow>
);

const Quote = ({ name, price, vol, big }) => (
  <QuoteRow>
    <RowName>{name}</RowName>
    <QuotePrice $big={big}>{price}</QuotePrice>
    <QuoteVol>{vol}</QuoteVol>
  </QuoteRow>
);

const Stat = ({ name, value, color, second, h }) => (
  <StatRow $h={h}>
    <RowName>{name}</RowName>
    <StatValue $c={color}>{value}</StatValue>
    <span />
    <RowName>{second}</RowName>
  </StatRow>
);

export default function App() {
  return (
    <Page>
      <GlobalStyle />
      <TitleBar>
        <MenuGroup>
          <MenuItem $w={33}>价</MenuItem>
          <MenuItem $w={40}>分析</MenuItem>
          <MenuItem $w={88}>扩展市场行情</MenuItem>
          <MenuItem $w={43}>资讯</MenuItem>
          <MenuItem $w={43}>工具</MenuItem>
          <MenuItem $w={40}>帮助</MenuItem>
        </MenuGroup>
        <Notice>
          <span>证券交易未登录</span>
          <span>兴森科技</span>
        </Notice>
        <TopButton>行  情</TopButton>
        <TopButton>资  讯</TopButton>
        <TopButton>交  易</TopButton>
        <TopButton>网上开户</TopButton>
        <TopButton>手  机</TopButton>
        <TopButton>藏金阁</TopButton>
        <WinControls>
          <WinButton><svg width="10" height="10"><path d="M1 5H9" stroke="#555" strokeWidth="2" /></svg></WinButton>
          <WinButton><svg width="10" height="10"><path d="M3 3V1H9V6H7M1 3H7V9H1Z" fill="none" stroke="#555" /></svg></WinButton>
          <WinButton><Cross12 c="#555" /></WinButton>
        </WinControls>
      </TitleBar>
      <Body>
        <LeftPane>
          <ToolRow>
            <PeriodTabs>
              <PeriodTab $w={34}>周线</PeriodTab>
              <PeriodTab $w={34} $on>日线</PeriodTab>
              <PeriodTab $w={32}>月线</PeriodTab>
              <PeriodTab $w={47}>45日线</PeriodTab>
              <PeriodTab $w={46}>60分钟</PeriodTab>
              <PeriodTab $w={46}>30分钟</PeriodTab>
              <PeriodTab $w={32}>更多</PeriodTab>
              <PeriodTab $w={14}>&gt;</PeriodTab>
            </PeriodTabs>
            <ToolCell $w={34}>复权</ToolCell>
            <ToolCell $w={37}>叠加</ToolCell>
            <ToolCell>画线</ToolCell>
            <ToolCell>F10</ToolCell>
            <ToolCell>标记</ToolCell>
            <ToolCell $w={35}>-自选</ToolCell>
            <ToolCell $w={37}>返回</ToolCell>
          </ToolRow>
          <PanelRow $h={643}>
            <ChartArea>
              <PriceChart />
              <Legend $top={0}>
                {LEGEND_ROWS.map((row, i) => <LegendLine key={i} items={row.items} shift={row.shift} nudge={row.nudge} />)}
              </Legend>
              <CornerMarks>◇▯</CornerMarks>
            </ChartArea>
            <AxisBox><PriceAxis /></AxisBox>
          </PanelRow>
          <PanelRow $h={273} $line>
            <ChartArea>
              <SubChart />
              <Legend $top={-3}>
                <LegendLine items={SUB_LEGEND} shift={-5} h={22} />
              </Legend>
            </ChartArea>
            <AxisBox $strong><SubAxis /></AxisBox>
          </PanelRow>
          <Strip>
            <StripLeft><StripMark>9</StripMark></StripLeft>
            <StripBlue>--</StripBlue>
            <StripPeriod>月线</StripPeriod>
          </Strip>
          <TabBar>
            {FORMULA_TABS.map(([name, w, clip, on]) => (
              <FormulaTab key={name} $w={w} $clip={clip} $on={on}>{name}</FormulaTab>
            ))}
            <StepCell>+</StepCell>
            <StepCell>-</StepCell>
            <StepCell>0</StepCell>
          </TabBar>
        </LeftPane>
        <InfoPanel>
          <StockHead>
            <StockName>兴森科技</StockName>
            <StockCode>002436</StockCode>
          </StockHead>
          <PriceLine>
            <PriceCell $w={81}>20.57<PriceUnit>元</PriceUnit></PriceCell>
            <PriceCell $w={89}>▲0.39</PriceCell>
            <PriceCell $w={50}>1.93%</PriceCell>
          </PriceLine>
          <QuoteBlock $split>
            <Quote name="卖五" price="20.61" vol={<>34.2<Unit>万</Unit></>} />
            <Quote name="卖四" price="20.60" />
            <Quote name="卖三" price="20.59" />
            <Quote name="卖二" price="20.58" />
            <Quote name="卖一" price="20.57" big />
          </QuoteBlock>
          <QuoteBlock>
            <Quote name="买一" price="20.56" big />
            <Quote name="买二" price="20.55" />
            <Quote name="买三" price="20.54" />
            <Quote name="买四" price="20.53" />
            <Quote name="买五" price="20.52" />
          </QuoteBlock>
          <QuoteBlock $pad={2}>
            <Stat name="今开" value="20.08" color="#30c030" second="均" />
            <Stat name="最高" value="20.59" color="#c83c3c" second="量" />
            <Stat name="最低" value="20.06" color="#30c030" second="市" />
            <Stat name="现量" value="1265" color="#a030b0" second="总" />
            <Stat name="外盘" value="25811" color="#c83c3c" second="内" />
          </QuoteBlock>
          <QuoteBlock $pad={1}>
            <Stat name="换手" value="1.38%" color="#b0b0b0" second="股" h={19} />
            <Stat name="净资" value="4.50" color="#b0b0b0" second="流" h={19} />
            <Stat name="收益(二)" value="0.141" color="#b0b0b0" second="P" h={19} />
          </QuoteBlock>
          <TickList>
            {TICKS.map(([time, price, vol, side, count], i) => (
              <TickRow key={i} $dash={time && i > 0}>
                <TickTime>{time}</TickTime>
                <TickPrice>{price}</TickPrice>
                <TickVol>{vol && <>{vol}<Unit>万</Unit></>}</TickVol>
                <TickSide $side={side}>{side}</TickSide>
                <TickCount>{count}</TickCount>
              </TickRow>
            ))}
          </TickList>
          <Watermark>178448.COM</Watermark>
          <PageTabs>
            {['笔', '价', '细', '五', '势', '指', '值', '筹'].map(t => <span key={t}>{t}</span>)}
          </PageTabs>
          <Toolbox>
            <ToolboxTitle>
              <span>画线工具</span>
              <ToolboxClose><Cross12 c="#1020a0" s={9} /></ToolboxClose>
            </ToolboxTitle>
            <ToolGrid>
              {TOOLS.map((icon, i) => <ToolCellBox key={i} $raised={i === 50}>{icon}</ToolCellBox>)}
            </ToolGrid>
          </Toolbox>
        </InfoPanel>
      </Body>
    </Page>
  );
}
